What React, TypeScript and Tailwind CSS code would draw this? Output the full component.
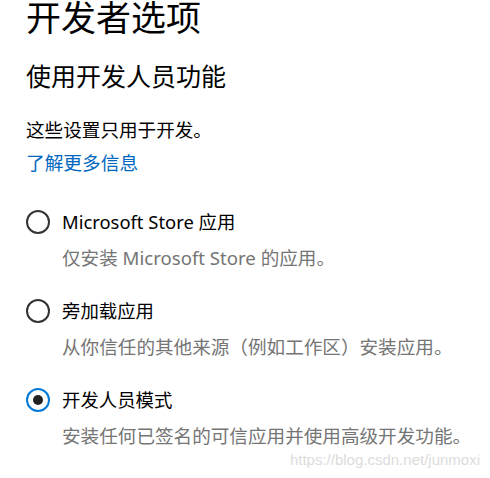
import { useState } from "react";

const options = [
  { id: "store", label: "Microsoft Store 应用", desc: "仅安装 Microsoft Store 的应用。" },
  { id: "sideload", label: "旁加载应用", desc: "从你信任的其他来源（例如工作区）安装应用。" },
  { id: "dev", label: "开发人员模式", desc: "安装任何已签名的可信应用并使用高级开发功能。" },
];

function Radio({ checked }: { checked: boolean }) {
  return checked ? (
    <span className="w-6 h-6 rounded-full border-2 border-[#0078d7] flex items-center justify-center shrink-0">
      <span className="w-[10px] h-[10px] rounded-full bg-[#222]" />
    </span>
  ) : (
    <span className="w-6 h-6 rounded-full border-2 border-[#333] shrink-0" />
  );
}

export default function App() {
  const [mode, setMode] = useState("dev");

  return (
    <div
      className="relative w-[490px] h-[478px] bg-white overflow-hidden pl-[26px] text-black"
      style={{ fontFamily: '"Noto Sans", "Noto Sans CJK SC", sans-serif' }}
    >
      <h1 className="text-[35px] leading-[36px] font-normal">开发者选项</h1>
      <h2 className="mt-[24px] text-[25px] leading-[32px] font-normal">使用开发人员功能</h2>

      <p className="mt-[26px] text-[18.6px] leading-[24px]">这些设置只用于开发。</p>
      <a className="block mt-[9px] text-[18.7px] leading-[24px] text-[#0067c0] cursor-pointer">了解更多信息</a>

      {/* 모드 선택 */}
      <div className="mt-[33px] flex flex-col gap-[27px]">
        {options.map((o) => (
          <div key={o.id} onClick={() => setMode(o.id)} className="cursor-pointer">
            <div className="flex items-center h-[28px] gap-3">
              <Radio checked={mode === o.id} />
              <span className="text-[18.4px] leading-[28px]">{o.label}</span>
            </div>
            <p className="mt-[10px] pl-9 text-[18.6px] leading-[24px] text-[#757575]">{o.desc}</p>
          </div>
        ))}
      </div>

      <span
        className="absolute right-[10px] bottom-[10px] text-[15px] leading-[16px] text-[#dcdcdc]"
        style={{ fontFamily: '"Liberation Sans", Arial, sans-serif' }}
      >
        https://blog.csdn.net/junmoxi
      </span>
    </div>
  );
}
